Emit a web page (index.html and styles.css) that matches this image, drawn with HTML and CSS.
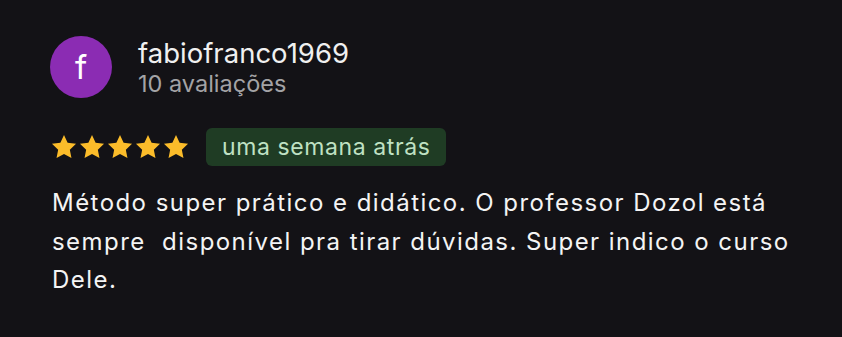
FILE: index.html
```html
<!DOCTYPE html>
<html lang="pt">
<head>
    <meta charset="UTF-8">
    <title>Avaliação</title>
    <link rel="stylesheet" href="styles.css">
</head>
<body>
    <div class="review">
        <div class="author">
            <div class="avatar">f</div>
            <div class="author-info">
                <div class="name">fabiofranco1969</div>
                <div class="count">10 avaliações</div>
            </div>
        </div>
        <div class="meta">
            <div class="stars">
                <svg viewBox="0 0 24 24"><path d="M12 1.8l3.1 6.6 7.2.9-5.3 5 1.4 7.1L12 17.9l-6.4 3.5 1.4-7.1-5.3-5 7.2-.9z"/></svg>
                <svg viewBox="0 0 24 24"><path d="M12 1.8l3.1 6.6 7.2.9-5.3 5 1.4 7.1L12 17.9l-6.4 3.5 1.4-7.1-5.3-5 7.2-.9z"/></svg>
                <svg viewBox="0 0 24 24"><path d="M12 1.8l3.1 6.6 7.2.9-5.3 5 1.4 7.1L12 17.9l-6.4 3.5 1.4-7.1-5.3-5 7.2-.9z"/></svg>
                <svg viewBox="0 0 24 24"><path d="M12 1.8l3.1 6.6 7.2.9-5.3 5 1.4 7.1L12 17.9l-6.4 3.5 1.4-7.1-5.3-5 7.2-.9z"/></svg>
                <svg viewBox="0 0 24 24"><path d="M12 1.8l3.1 6.6 7.2.9-5.3 5 1.4 7.1L12 17.9l-6.4 3.5 1.4-7.1-5.3-5 7.2-.9z"/></svg>
            </div>
            <span class="badge">uma semana atrás</span>
        </div>
        <p class="text">Método super prático e didático. O professor Dozol está sempre&nbsp; disponível pra tirar dúvidas. Super indico o curso Dele.</p>
    </div>
</body>
</html>
```

FILE: styles.css
```css
body {
    margin: 0;
    background-color: #131216;
    font-family: Inter, "Noto Sans", sans-serif;
    color: #f2f2f2;
}

.review {
    width: 775px;
    padding: 36px 0 0 50px;
}

.author {
    display: flex;
    align-items: center;
}

.avatar {
    width: 62px;
    height: 62px;
    border-radius: 50%;
    background-color: #8b2cb3;
    color: #fff;
    font-size: 33px;
    display: flex;
    align-items: center;
    justify-content: center;
    margin-right: 26px;
}

.author-info {
    margin-top: 0;
}

.name {
    font-size: 27.5px;
    line-height: 33px;
    color: #f0f0f0;
}

.count {
    font-size: 23.5px;
    line-height: 28px;
    color: #a3a3a6;
}

.meta {
    display: flex;
    align-items: center;
    margin-top: 30px;
}

.stars {
    display: flex;
    margin-right: 16px;
}

.stars svg {
    width: 28px;
    height: 28px;
    fill: #fbbc2a;
}

.badge {
    background-color: #1f3c24;
    color: #bfe1c3;
    font-size: 23px;
    letter-spacing: 0.6px;
    line-height: 38px;
    padding: 0 16px;
    border-radius: 6px;
}

.text {
    margin: 18px 0 0 2px;
    font-size: 24px;
    letter-spacing: 1.45px;
    line-height: 38.5px;
    color: #f4f4f4;
}
```
